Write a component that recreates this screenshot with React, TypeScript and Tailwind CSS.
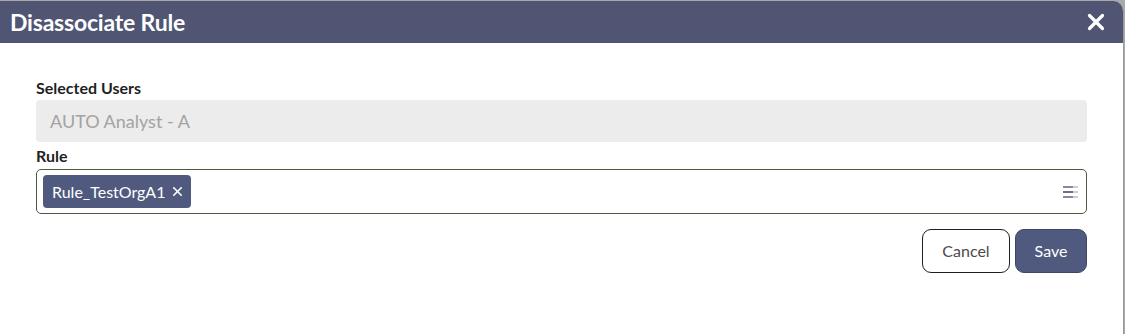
import { X } from "lucide-react";

function ListIcon() {
  return (
    <svg width="16" height="14" viewBox="0 0 16 14" className="shrink-0">
      <rect x="0" y="1" width="10" height="2" fill="#8a8a9a" />
      <rect x="10" y="1" width="5" height="2" fill="#cfcfcf" />
      <rect x="0" y="6" width="10" height="2" fill="#6a6f8a" />
      <rect x="10" y="6" width="5" height="2" fill="#cfcfcf" />
      <rect x="0" y="11" width="10" height="2" fill="#8a8a9a" />
      <rect x="10" y="11" width="5" height="2" fill="#cfcfcf" />
    </svg>
  );
}

export default function App() {
  return (
    <div className="h-[334px] w-[1125px] bg-[#a9a9a9] pt-px font-['Lato',sans-serif]">
      <div className="flex h-[333px] w-[1124px] flex-col overflow-hidden rounded-tr-[10px] border-r border-[#9a9a9a] bg-white">
        <div className="flex h-[42px] shrink-0 items-center justify-between bg-[#4f5573] pl-[10px] pr-[14px]">
          <h1 className="text-[23px] font-bold tracking-[-0.2px] text-white">Disassociate Rule</h1>
          <X className="h-[26px] w-[26px] text-white" strokeWidth={3} />
        </div>

        <div className="flex flex-col px-[36px] pt-[35px]">
          <label className="mb-[2px] text-[16px] font-bold leading-[20px] text-[#1f1f1f]">
            Selected Users
          </label>
          <div className="flex h-[42px] items-center rounded-[4px] bg-[#ececec] px-[14px] text-[18px] text-[#a3a3a3]">
            AUTO Analyst - A
          </div>

          <label className="mb-[3px] mt-[4px] text-[16px] font-bold leading-[20px] text-[#1f1f1f]">
            Rule
          </label>
          <div className="flex h-[45px] items-center justify-between rounded-[5px] border border-[#4b5a40] pl-[6px] pr-[7px]">
            <span className="flex h-[33px] items-center gap-[5px] rounded-[4px] bg-[#505a7e] pl-[9px] pr-[6px] text-[16px] text-white">
              Rule_TestOrgA1
              <X className="h-[15px] w-[15px]" strokeWidth={2.6} />
            </span>
            <ListIcon />
          </div>

          <div className="mt-[15px] flex justify-end gap-[5px]">
            <button className="h-[44px] w-[88px] rounded-[9px] border border-[#1f1f1f] bg-white text-[16px] text-[#4a4a4a]">
              Cancel
            </button>
            <button className="h-[44px] w-[72px] rounded-[9px] border border-[#3e4766] bg-[#505a7e] text-[16px] text-white">
              Save
            </button>
          </div>
        </div>
      </div>
    </div>
  );
}
